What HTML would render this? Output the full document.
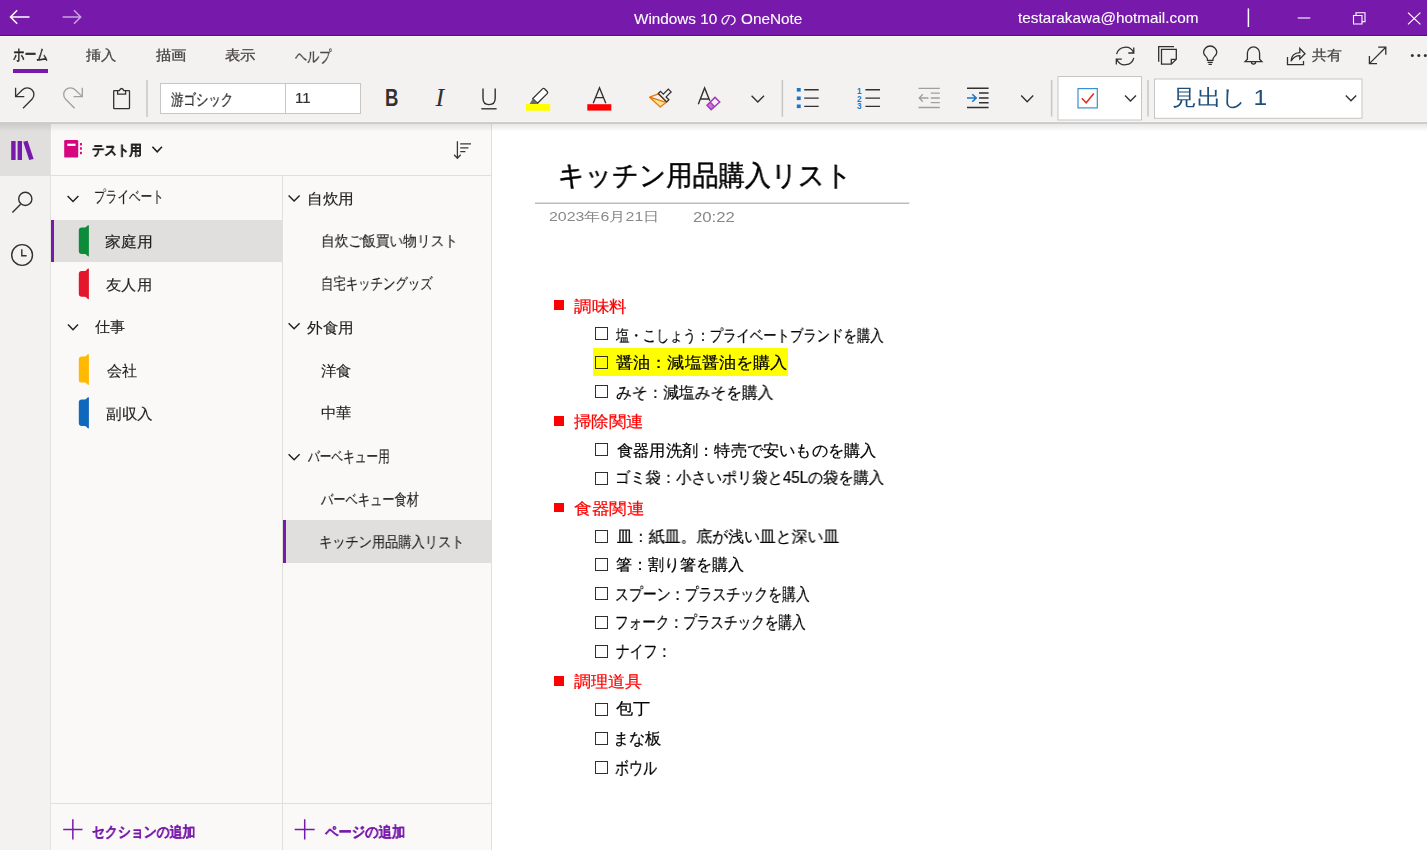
<!DOCTYPE html>
<html lang="ja">
<head>
<meta charset="utf-8">
<style>
*{box-sizing:border-box;margin:0;padding:0}
html,body{width:1427px;height:850px;overflow:hidden;background:#fff;font-family:"Liberation Sans",sans-serif;color:#201f1e}
.p{position:absolute}
.tx{position:absolute;white-space:nowrap;line-height:1;transform-origin:0 0;will-change:transform;-webkit-text-stroke:0.3px currentColor}
.cb{position:absolute;left:595px;width:13px;height:13px;border:1.3px solid #303030}
.rb{position:absolute;left:553.6px;width:10.4px;height:9.7px;background:#ff0000}
svg.ov{position:absolute;left:0;top:0}
</style>
</head>
<body>
<div class="p" style="left:0;top:0;width:1427px;height:35px;background:#7719aa"></div>
<div class="p" style="left:0;top:35px;width:1427px;height:1px;background:#5e00a0"></div>
<div class="p" style="left:0;top:36px;width:1427px;height:1px;background:#fbf9fb"></div>
<div class="p" style="left:0;top:37px;width:1427px;height:84px;background:#f3f2f1"></div>
<div class="p" style="left:12.7px;top:69px;width:35.8px;height:4px;background:#7719aa"></div>
<!-- rail -->
<div class="p" style="left:0;top:122px;width:51px;height:728px;background:#f3f2f1;border-right:1px solid #e3e2e1"></div>
<div class="p" style="left:0;top:123px;width:50px;height:53px;background:#e1dfdd"></div>
<!-- panels -->
<div class="p" style="left:51px;top:123px;width:441px;height:727px;background:#faf9f8;border-right:1px solid #e1dfdd"></div>
<div class="p" style="left:51px;top:175px;width:440px;height:1px;background:#e1dfdd"></div>
<div class="p" style="left:282px;top:176px;width:1px;height:674px;background:#e1dfdd"></div>
<div class="p" style="left:51px;top:803px;width:440px;height:1px;background:#e1dfdd"></div>
<div class="p" style="left:51px;top:220px;width:231px;height:42px;background:#e1dfdd"></div>
<div class="p" style="left:51px;top:220px;width:3px;height:42px;background:#7719aa"></div>
<div class="p" style="left:283px;top:520px;width:208px;height:43px;background:#e1dfdd"></div>
<div class="p" style="left:283px;top:520px;width:3px;height:43px;background:#7719aa"></div>
<div class="p" style="left:0;top:121px;width:1427px;height:1px;background:#f7f6f5"></div>
<div class="p" style="left:0;top:122px;width:1427px;height:2px;background:#cdcccb"></div>
<div class="p" style="left:0;top:124px;width:1427px;height:8px;background:linear-gradient(rgba(0,0,0,0.09),rgba(0,0,0,0))"></div>
<!-- content -->
<div class="p" style="left:593px;top:347.6px;width:194.7px;height:28.2px;background:#ffff00"></div>
<div class="cb" style="top:327.2px"></div>
<div class="cb" style="top:356.1px"></div>
<div class="cb" style="top:385.0px"></div>
<div class="cb" style="top:442.8px"></div>
<div class="cb" style="top:471.7px"></div>
<div class="cb" style="top:529.5px"></div>
<div class="cb" style="top:558.4px"></div>
<div class="cb" style="top:587.3px"></div>
<div class="cb" style="top:616.2px"></div>
<div class="cb" style="top:645.1px"></div>
<div class="cb" style="top:702.9px"></div>
<div class="cb" style="top:731.8px"></div>
<div class="cb" style="top:760.7px"></div>
<div class="rb" style="top:300.4px"></div>
<div class="rb" style="top:416.0px"></div>
<div class="rb" style="top:502.7px"></div>
<div class="rb" style="top:676.1px"></div><svg class="ov" width="1427" height="850" viewBox="0 0 1427 850" fill="none" stroke-linecap="butt">
<!-- title bar -->
<g stroke="#fff" stroke-width="1.5">
<path d="M29.5 17H11 M17.2 10.3L10.5 17L17.2 23.7"/>
<path d="M1248.4 8.4V27"/>
<path d="M1297.7 18H1310.3" stroke-width="1.1"/>
<path d="M1353.5 15.5h8.5v8.5h-8.5z M1356 15.5V12.8h9v8.8h-3" stroke-width="1.1"/>
<path d="M1408 12.6L1420.4 24.4M1420.4 12.6L1408 24.4" stroke-width="1.2"/>
</g>
<path d="M62.6 17H80.5 M74 10.3L80.7 17L74 23.7" stroke="#c9a5df" stroke-width="1.5"/>
<!-- ribbon row2 -->
<g stroke="#323130" stroke-width="1.3">
<path d="M15.6 87.8V96.6H24.3"/>
<path d="M15.8 96.4L22.46 89.76A6.7 6.7 0 0 1 31.94 99.24L23 108.2"/>
<path d="M117.5 90.6H114.3Q113.7 90.6 113.7 91.3V108Q113.7 108.7 114.4 108.7H128.8Q129.5 108.7 129.5 108V91.3Q129.5 90.6 128.8 90.6H125.7 M117.6 94.2V90.6H119.4Q120.2 88.5 121.6 88.5Q123 88.5 123.8 90.6H125.6V94.2Z"/>
</g>
<g stroke="#a19f9d" stroke-width="1.3">
<path d="M82.3 87.8V96.6H73.6"/>
<path d="M82.1 96.4L75.14 89.76A6.7 6.7 0 0 0 65.66 99.24L74.6 108.2"/>
</g>
<g stroke="#c8c6c4" stroke-width="1.5">
<path d="M147 80V117 M782.4 80V116.7 M1051.6 80V116.6 M1148 80V116.6"/>
</g>
<rect x="160.5" y="83.5" width="200" height="30" fill="#fff" stroke="#c8c6c4"/>
<path d="M285.5 84V113" stroke="#c8c6c4"/>
<rect x="1058" y="76.5" width="83.5" height="43.5" fill="#fff" stroke="#c8c6c4"/>
<rect x="1154.5" y="79" width="207.5" height="39.3" fill="#fff" stroke="#c8c6c4"/>
<text transform="translate(385.8 106) scale(0.78 1)" x="-1" y="0" font-family="Liberation Sans" font-weight="700" font-size="23.8" fill="#323130" stroke="none">B</text>
<text x="435.5" y="106" font-family="Liberation Serif" font-style="italic" font-size="26" fill="#323130" stroke="none">I</text>
<g stroke="#323130" stroke-width="1.4">
<path d="M483 88.5V98.3Q483 104.6 489 104.6Q495.2 104.6 495.2 98.3V88.5"/>
<path d="M481.3 108.8H496.6"/>
<path d="M593.2 103.3L599.5 87.8L605.8 103.3M595.4 97.6H603.6"/>
<path d="M698.3 104.3L704.6 87.9L709.8 100.8M700.7 99H709.4"/>
<path d="M751.6 95.8L757.8 102L764 95.8"/>
<path d="M1021.2 95.5L1027.2 101.8L1033.2 95.5"/>
<path d="M1125 95.5L1130.5 101L1136 95.5"/>
<path d="M1345.8 95.5L1351 100.8L1356.2 95.5"/>
</g>
<path d="M544.5 88.8L547.2 91.5Q548.2 92.6 547.2 93.6L537.5 103.3L532.8 98.6L542.5 88.9Q543.5 87.9 544.5 88.8Z" stroke="#323130" stroke-width="1.3" fill="#fff"/>
<path d="M532.8 98.6L537.5 103.3L536 104.2H529.5Z" fill="#6b6a69"/>
<rect x="526" y="104" width="24.2" height="6.8" fill="#ffff00"/>
<rect x="587.3" y="104.2" width="24" height="6.4" fill="#ff0000"/>
<!-- format painter -->
<path d="M651.5 98L665.3 102.4L660.3 106.3Z" fill="#fde58a"/>
<path d="M649.6 97.2L658.4 93.8L666.6 102L660.3 107ZM649.6 97.2L666 102.3" stroke="#e8790f" stroke-width="1.3" stroke-linejoin="round"/>
<path d="M658.3 93.5L660.5 91.3L663.3 94.1L668.3 89.1L671.1 91.9L666.1 96.9L668.9 99.7L666.7 101.9Z" stroke="#323130" stroke-width="1.3" fill="#f3f2f1"/>
<!-- eraser -->
<path d="M707.2 105.2L710.2 102.2L714.2 106.5L711.2 109.5Z" fill="#c77ad6"/>
<path d="M715 97.4L719.7 102L711.2 109.6L707 105.2ZM710.1 102.1L714.3 106.6" stroke="#a53bbd" stroke-width="1.5"/>
<!-- bullets -->
<g fill="#1777cc"><rect x="796.8" y="88" width="3.9" height="3.6"/><rect x="796.8" y="96.5" width="3.9" height="3.6"/><rect x="796.8" y="104.5" width="3.9" height="3.6"/></g>
<g stroke="#323130" stroke-width="1.4"><path d="M804.2 89.8H818.7M804.2 98.1H818.7M804.2 106.4H818.7"/>
<path d="M865.4 89.8H880M865.4 98.1H880M865.4 106.4H880"/></g>
<g font-family="Liberation Sans" font-weight="700" font-size="8.2" fill="#1777cc" stroke="none"><text x="857" y="93.6">1</text><text x="857" y="101.6">2</text><text x="857" y="109.4">3</text></g>
<g stroke="#a19f9d" stroke-width="1.3"><path d="M918.5 88.3H939.8M918.5 107.5H939.8M930.8 93.1H939.8M930.8 98H939.8M930.8 102.7H939.8 M928.5 98H919.5M922.8 94.3L919.2 98L922.8 101.7"/></g>
<g stroke="#323130" stroke-width="1.5"><path d="M967 88.3H988.6M967 107.5H988.6M979 93.1H988.6M979 98H988.6M979 102.7H988.6"/></g>
<path d="M967 98H976M972.3 94.2L976.2 98L972.3 101.8" stroke="#1777cc" stroke-width="1.6"/>
<rect x="1078" y="88.6" width="19.3" height="19.3" stroke="#3a8fcf" stroke-width="1.2"/>
<path d="M1081.8 98.2L1086.2 102.8L1093.8 93.5" stroke="#e0312b" stroke-width="1.6"/>
<!-- top right icons -->
<g stroke="#323130" stroke-width="1.3">
<path d="M1116.6 54.2A9 9 0 0 1 1133.6 52.6 M1133.8 47.5V53H1128.3"/>
<path d="M1133.8 57.8A9 9 0 0 1 1116.8 59.4 M1116.3 64.6V59.2H1121.8"/>
<path d="M1161.5 49.3H1176.3V59.3L1171.3 64.1H1161.5Z M1171.3 64.1V59.3H1176.3 M1158.7 61.8V46.6H1174"/>
<path d="M1207.4 60.4V58.9C1207.4 56.9 1203.6 55.6 1203.6 52.6A6.6 6.6 0 0 1 1216.8 52.6C1216.8 55.6 1213 56.9 1213 58.9V60.4Z M1207.6 62.3H1212.8 M1208.5 64.4H1211.9"/>
<path d="M1247.4 59.2V53A6.1 6.1 0 0 1 1259.6 53V59.2L1261.9 61.6H1245.1Z M1251.4 62A2.1 2.1 0 0 0 1255.6 62"/>
<path d="M1287.5 57V64.6H1303.5V61"/>
<path d="M1291 61.2Q1291.5 52.8 1299.8 52.6V48.3L1305 53.8L1299.8 59V55.7Q1294.3 55.7 1291 61.2Z"/>
<path d="M1369.4 63.6L1385.8 47.2 M1369.4 56V63.6H1377 M1378.2 47.2H1385.8V54.8"/>
</g>
<g fill="#323130"><circle cx="1412.3" cy="55.4" r="1.5"/><circle cx="1418.8" cy="55.4" r="1.5"/><circle cx="1425.3" cy="55.4" r="1.5"/></g>
<!-- rail icons -->
<g fill="#7719aa"><rect x="11.2" y="141" width="4.4" height="19"/><rect x="17.6" y="141" width="4.4" height="19"/><path d="M23.2 141.8L27.6 140.8L33.6 159L29.2 160Z"/></g>
<g stroke="#323130" stroke-width="1.4">
<circle cx="25.3" cy="198.9" r="6.6"/><path d="M12.4 212.4L20.6 204.2"/>
<circle cx="22.1" cy="255" r="10.4"/><path d="M21.8 249.3V255.8H26.6"/>
</g>
<!-- notebook header -->
<rect x="64.2" y="140" width="14" height="17.6" rx="1.2" fill="#d6067e"/>
<rect x="67.3" y="143.7" width="8.2" height="2.2" fill="#fff"/>
<g fill="#d6067e"><rect x="80" y="143" width="1.9" height="2.4"/><rect x="80" y="147.3" width="1.9" height="2.4"/><rect x="80" y="151.8" width="1.9" height="2.4"/></g>
<g stroke="#201f1e" stroke-width="1.4">
<path d="M152.4 146.8L157.2 151.8L162 146.8" stroke-width="1.6"/>
<path d="M67.6 196L73 201.6L78.4 196"/>
<path d="M68 324.5L73 329.8L78 324.5"/>
<path d="M288.6 195.4L294.1 201L299.6 195.4"/>
<path d="M288.6 323.2L294.1 328.8L299.6 323.2"/>
<path d="M288.6 454.2L294.1 459.8L299.6 454.2"/>
</g>
<g stroke="#3b3a39" stroke-width="1.3"><path d="M457.4 141.2V157.8 M454.1 154.8L457.4 158.2L460.7 154.8 M460.2 143.9H471 M460.2 147.9H468.4 M460.2 151.7H465.4"/></g>
<!-- section tabs -->
<path d="M88.9 225.2V256.4Q87.2 256.4 86.6 254.99999999999997Q86 253.99999999999997 84.5 253.99999999999997H81.8Q78.8 253.99999999999997 78.8 250.79999999999998V230.6Q78.8 227.6 81.8 227.6H84.5Q86 227.6 86.6 226.6Q87.2 225.2 88.9 225.2Z" fill="#0c8b3b"/>
<path d="M88.9 268.5V299.2Q87.2 299.2 86.6 297.8Q86 296.8 84.5 296.8H81.8Q78.8 296.8 78.8 293.59999999999997V273.9Q78.8 270.9 81.8 270.9H84.5Q86 270.9 86.6 269.9Q87.2 268.5 88.9 268.5Z" fill="#e3162b"/>
<path d="M88.9 354.2V385Q87.2 385 86.6 383.6Q86 382.6 84.5 382.6H81.8Q78.8 382.6 78.8 379.4V359.59999999999997Q78.8 356.59999999999997 81.8 356.59999999999997H84.5Q86 356.59999999999997 86.6 355.59999999999997Q87.2 354.2 88.9 354.2Z" fill="#ffb900"/>
<path d="M88.9 397.2V428.4Q87.2 428.4 86.6 427.0Q86 426.0 84.5 426.0H81.8Q78.8 426.0 78.8 422.79999999999995V402.59999999999997Q78.8 399.59999999999997 81.8 399.59999999999997H84.5Q86 399.59999999999997 86.6 398.59999999999997Q87.2 397.2 88.9 397.2Z" fill="#0f68bb"/>
<!-- footer plus -->
<g stroke="#7719aa" stroke-width="1.5"><path d="M63.2 829.5H82.5M72.85 819.3V839.6 M294.7 829.5H314.7M304.7 819.3V839.6"/></g>
<!-- page title underline -->
<path d="M535 203.2H909.3" stroke="#bdbdbd" stroke-width="1.4"/>
</svg>
<div id="t0" class="tx" style="left:634.47px;top:11.70px;font-size:14.00px;color:#ffffff;font-weight:400;transform:scaleX(1.0916);-webkit-text-stroke:0.1px">Windows 10 の OneNote</div>
<div id="t1" class="tx" style="left:1018.00px;top:10.15px;font-size:15.00px;color:#ffffff;font-weight:400;transform:scaleX(1.0193);-webkit-text-stroke:0.1px">testarakawa@hotmail.com</div>
<div id="t2" class="tx" style="left:12.68px;top:47.01px;font-size:16.00px;color:#252423;font-weight:400;transform:scaleX(0.7288);-webkit-text-stroke:0.55px">ホーム</div>
<div id="t3" class="tx" style="left:86.06px;top:48.22px;font-size:14.30px;color:#484644;font-weight:400;transform:scaleX(1.0837)">挿入</div>
<div id="t4" class="tx" style="left:155.90px;top:48.18px;font-size:14.30px;color:#484644;font-weight:400;transform:scaleX(1.1023)">描画</div>
<div id="t5" class="tx" style="left:225.36px;top:48.18px;font-size:14.30px;color:#484644;font-weight:400;transform:scaleX(1.1061)">表示</div>
<div id="t6" class="tx" style="left:295.00px;top:49.16px;font-size:16.00px;color:#484644;font-weight:400;transform:scaleX(0.7571)">ヘルプ</div>
<div id="t7" class="tx" style="left:1312.00px;top:47.69px;font-size:14.00px;color:#484644;font-weight:400;transform:scaleX(1.0601)">共有</div>
<div id="t8" class="tx" style="left:171.16px;top:92.20px;font-size:15.50px;color:#323130;font-weight:400;transform:scaleX(0.7779)">游ゴシック</div>
<div id="t9" class="tx" style="left:295.26px;top:90.02px;font-size:15.00px;color:#323130;font-weight:400;transform:scaleX(1.0005);-webkit-text-stroke:0.2px">11</div>
<div id="t10" class="tx" style="left:1171.90px;top:87.33px;font-size:22.00px;color:#1f4e79;font-weight:400;transform:scaleX(1.1142);-webkit-text-stroke:0">見出し 1</div>
<div id="t11" class="tx" style="left:92.14px;top:142.77px;font-size:14.30px;color:#201f1e;font-weight:700;transform:scaleX(0.8901)">テスト用</div>
<div id="t12" class="tx" style="left:93.83px;top:187.75px;font-size:16.20px;color:#201f1e;font-weight:400;transform:scaleX(0.7275);-webkit-text-stroke:0.15px">プライベート</div>
<div id="t13" class="tx" style="left:105.31px;top:235.13px;font-size:14.80px;color:#201f1e;font-weight:400;transform:scaleX(1.0608);-webkit-text-stroke:0.15px">家庭用</div>
<div id="t14" class="tx" style="left:106.43px;top:278.19px;font-size:14.80px;color:#201f1e;font-weight:400;transform:scaleX(1.0212);-webkit-text-stroke:0.15px">友人用</div>
<div id="t15" class="tx" style="left:95.04px;top:320.28px;font-size:14.80px;color:#201f1e;font-weight:400;transform:scaleX(1.0050);-webkit-text-stroke:0.15px">仕事</div>
<div id="t16" class="tx" style="left:106.51px;top:364.32px;font-size:14.80px;color:#201f1e;font-weight:400;transform:scaleX(1.0037);-webkit-text-stroke:0.15px">会社</div>
<div id="t17" class="tx" style="left:105.57px;top:407.19px;font-size:14.80px;color:#201f1e;font-weight:400;transform:scaleX(1.0401);-webkit-text-stroke:0.15px">副収入</div>
<div id="t18" class="tx" style="left:307.05px;top:191.72px;font-size:14.50px;color:#201f1e;font-weight:400;transform:scaleX(1.0468);-webkit-text-stroke:0.15px">自炊用</div>
<div id="t19" class="tx" style="left:321.19px;top:234.14px;font-size:14.80px;color:#201f1e;font-weight:400;transform:scaleX(0.9135);-webkit-text-stroke:0.15px">自炊ご飯買い物リスト</div>
<div id="t20" class="tx" style="left:320.98px;top:276.16px;font-size:15.50px;color:#201f1e;font-weight:400;transform:scaleX(0.7742);-webkit-text-stroke:0.15px">自宅キッチングッズ</div>
<div id="t21" class="tx" style="left:307.46px;top:320.69px;font-size:14.50px;color:#201f1e;font-weight:400;transform:scaleX(1.0393);-webkit-text-stroke:0.15px">外食用</div>
<div id="t22" class="tx" style="left:321.47px;top:364.18px;font-size:14.80px;color:#201f1e;font-weight:400;transform:scaleX(1.0292);-webkit-text-stroke:0.15px">洋食</div>
<div id="t23" class="tx" style="left:321.46px;top:406.18px;font-size:14.80px;color:#201f1e;font-weight:400;transform:scaleX(1.0269);-webkit-text-stroke:0.15px">中華</div>
<div id="t24" class="tx" style="left:307.80px;top:449.12px;font-size:15.50px;color:#201f1e;font-weight:400;transform:scaleX(0.7303);-webkit-text-stroke:0.15px">バーベキュー用</div>
<div id="t25" class="tx" style="left:321.24px;top:492.15px;font-size:15.50px;color:#201f1e;font-weight:400;transform:scaleX(0.7654);-webkit-text-stroke:0.15px">バーベキュー食材</div>
<div id="t26" class="tx" style="left:319.27px;top:534.14px;font-size:15.20px;color:#201f1e;font-weight:400;transform:scaleX(0.8816);-webkit-text-stroke:0.15px">キッチン用品購入リスト</div>
<div id="t27" class="tx" style="left:92.16px;top:823.64px;font-size:15.00px;color:#7719aa;font-weight:700;transform:scaleX(0.8615);-webkit-text-stroke:0.15px">セクションの追加</div>
<div id="t28" class="tx" style="left:325.45px;top:823.64px;font-size:15.00px;color:#7719aa;font-weight:700;transform:scaleX(0.8919);-webkit-text-stroke:0.15px">ページの追加</div>
<div id="t29" class="tx" style="left:557.78px;top:162.12px;font-size:27.50px;color:#000000;font-weight:400;transform:scaleX(0.9339);-webkit-text-stroke:0.5px">キッチン用品購入リスト</div>
<div id="t30" class="tx" style="left:549.48px;top:211.38px;font-size:12.80px;color:#8a8886;font-weight:400;transform:scaleX(1.2435);-webkit-text-stroke:0">2023年6月21日</div>
<div id="t31" class="tx" style="left:692.78px;top:208.80px;font-size:15.50px;color:#8a8886;font-weight:400;transform:scaleX(1.0794);-webkit-text-stroke:0">20:22</div>
<div id="t32" class="tx" style="left:574.00px;top:299.07px;font-size:15.80px;color:#ff0000;font-weight:400;transform:scaleX(1.0944);-webkit-text-stroke:0.2px">調味料</div>
<div id="t33" class="tx" style="left:615.59px;top:327.07px;font-size:16.30px;color:#000000;font-weight:400;transform:scaleX(0.8362);-webkit-text-stroke:0.2px">塩・こしょう：プライベートブランドを購入</div>
<div id="t34" class="tx" style="left:615.91px;top:355.45px;font-size:15.80px;color:#000000;font-weight:400;transform:scaleX(1.0720);-webkit-text-stroke:0.2px">醤油：減塩醤油を購入</div>
<div id="t35" class="tx" style="left:616.00px;top:384.57px;font-size:15.80px;color:#000000;font-weight:400;transform:scaleX(0.9837);-webkit-text-stroke:0.2px">みそ：減塩みそを購入</div>
<div id="t36" class="tx" style="left:574.00px;top:413.53px;font-size:15.80px;color:#ff0000;font-weight:400;transform:scaleX(1.0892);-webkit-text-stroke:0.2px">掃除関連</div>
<div id="t37" class="tx" style="left:617.03px;top:443.07px;font-size:15.80px;color:#000000;font-weight:400;transform:scaleX(1.0140);-webkit-text-stroke:0.2px">食器用洗剤：特売で安いものを購入</div>
<div id="t38" class="tx" style="left:615.04px;top:470.41px;font-size:15.80px;color:#000000;font-weight:400;transform:scaleX(0.9543);-webkit-text-stroke:0.2px">ゴミ袋：小さいポリ袋と45Lの袋を購入</div>
<div id="t39" class="tx" style="left:574.07px;top:501.08px;font-size:15.80px;color:#ff0000;font-weight:400;transform:scaleX(1.0996);-webkit-text-stroke:0.2px">食器関連</div>
<div id="t40" class="tx" style="left:617.00px;top:528.57px;font-size:15.80px;color:#000000;font-weight:400;transform:scaleX(0.9921);-webkit-text-stroke:0.2px">皿：紙皿。底が浅い皿と深い皿</div>
<div id="t41" class="tx" style="left:615.95px;top:556.93px;font-size:15.80px;color:#000000;font-weight:400;transform:scaleX(1.0028);-webkit-text-stroke:0.2px">箸：割り箸を購入</div>
<div id="t42" class="tx" style="left:615.29px;top:587.05px;font-size:16.80px;color:#000000;font-weight:400;transform:scaleX(0.8186);-webkit-text-stroke:0.2px">スプーン：プラスチックを購入</div>
<div id="t43" class="tx" style="left:615.30px;top:615.07px;font-size:16.80px;color:#000000;font-weight:400;transform:scaleX(0.8011);-webkit-text-stroke:0.2px">フォーク：プラスチックを購入</div>
<div id="t44" class="tx" style="left:616.02px;top:642.86px;font-size:17.00px;color:#000000;font-weight:400;transform:scaleX(0.8120);-webkit-text-stroke:0.2px">ナイフ：</div>
<div id="t45" class="tx" style="left:573.51px;top:673.88px;font-size:15.80px;color:#ff0000;font-weight:400;transform:scaleX(1.0639);-webkit-text-stroke:0.2px">調理道具</div>
<div id="t46" class="tx" style="left:615.91px;top:701.02px;font-size:15.80px;color:#000000;font-weight:400;transform:scaleX(1.0747);-webkit-text-stroke:0.2px">包丁</div>
<div id="t47" class="tx" style="left:612.93px;top:730.55px;font-size:15.80px;color:#000000;font-weight:400;transform:scaleX(1.0155);-webkit-text-stroke:0.2px">まな板</div>
<div id="t48" class="tx" style="left:615.18px;top:760.02px;font-size:17.50px;color:#000000;font-weight:400;transform:scaleX(0.7774);-webkit-text-stroke:0.2px">ボウル</div>
</body>
</html>
